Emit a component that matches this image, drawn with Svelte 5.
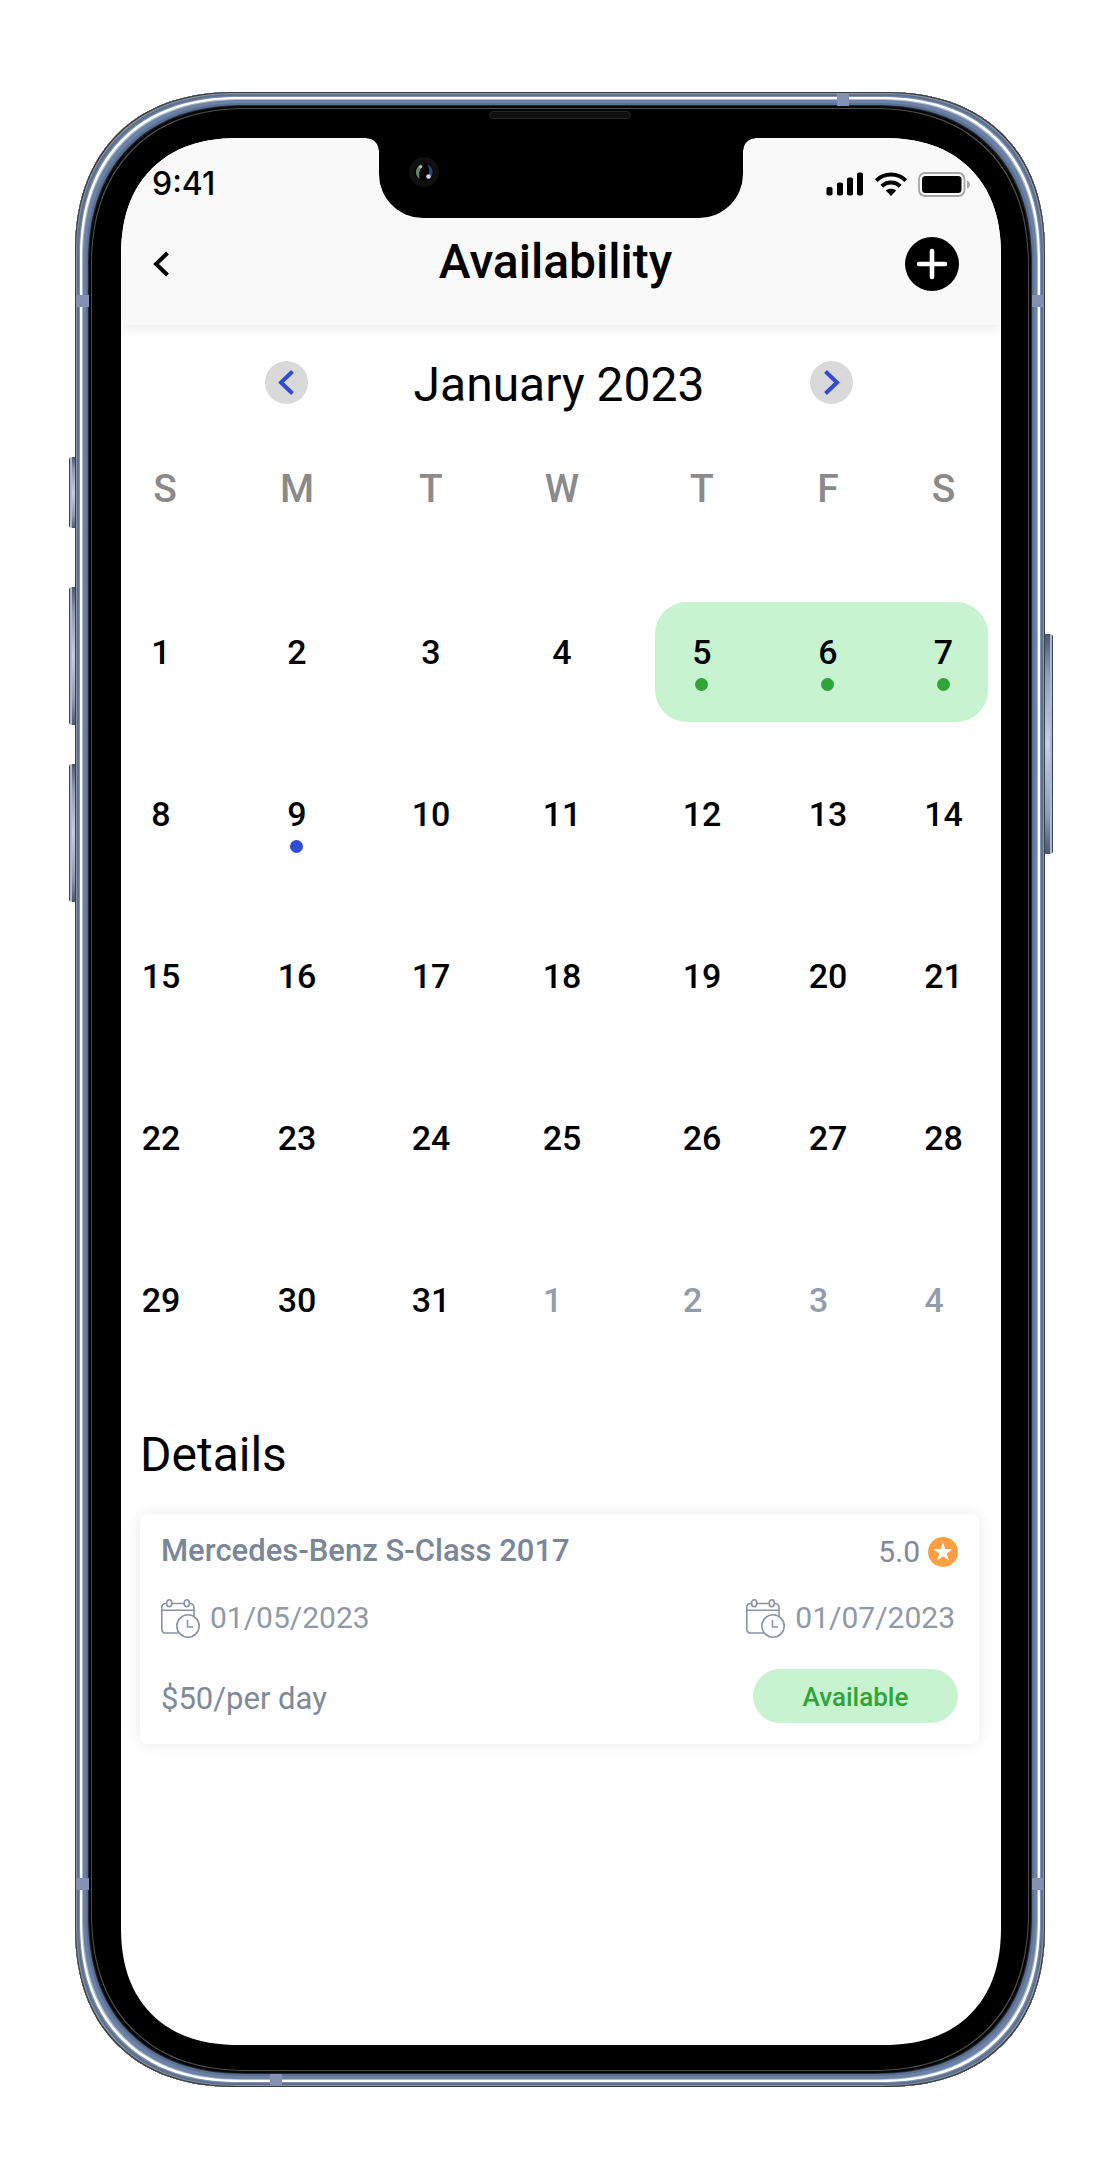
<script>
  const weekdays = [
    { id: 'sun', label: 'S', weight: 80 },
    { id: 'mon', label: 'M', weight: 192 },
    { id: 'tue', label: 'T', weight: 76 },
    { id: 'wed', label: 'W', weight: 186 },
    { id: 'thu', label: 'T', weight: 94 },
    { id: 'fri', label: 'F', weight: 158 },
    { id: 'sat', label: 'S', weight: 81 }
  ];
  const total = weekdays.reduce((sum, d) => sum + d.weight, 0);

  const booked = [5, 6, 7];
  const today = 9;

  const weeks = Array.from({ length: 5 }, (_, w) =>
    Array.from({ length: 7 }, (_, d) => {
      const n = w * 7 + d + 1;
      const next = n > 31;
      return {
        n: next ? n - 31 : n,
        next,
        booked: !next && booked.includes(n),
        first: !next && n === booked[0],
        last: !next && n === booked[booked.length - 1],
        today: !next && n === today
      };
    })
  );
</script>

{#snippet calendarIcon()}
  <svg class="cal-icon" viewBox="0 0 39 39" aria-hidden="true">
    <path d="M5.5 4.5H4.5a3.5 3.5 0 0 0-3.7 3.5V30.5a3.5 3.5 0 0 0 3.7 3.5H17.5M11 4.5H23M29 4.5a3.8 3.8 0 0 1 4 3.8V17M1 11.3H33" />
    <ellipse cx="8.2" cy="4.3" rx="2.6" ry="3.5" />
    <ellipse cx="25.8" cy="4.3" rx="2.6" ry="3.5" />
    <circle cx="27" cy="27" r="11.2" />
    <path d="M26.5 21V28H32" />
  </svg>
{/snippet}

<div class="stage">
  <div class="phone">
    <i class="key key-mute"></i>
    <i class="key key-up"></i>
    <i class="key key-down"></i>
    <i class="key key-power"></i>
    <i class="band band-top"></i>
    <i class="band band-bottom"></i>
    <i class="band band-left upper"></i>
    <i class="band band-left lower"></i>
    <i class="band band-right upper"></i>
    <i class="band band-right lower"></i>
    <i class="speaker"></i>

    <div class="screen">
      <div class="notch">
        <svg class="camera" viewBox="0 0 30 30" aria-hidden="true">
          <circle cx="15" cy="15" r="15" fill="#0f0f10" />
          <circle cx="15" cy="15" r="9.3" fill="#030303" />
          <path d="M11.5 7.5A8.5 8.5 0 0 0 10.5 22C9.6 17 10.8 12 14 9Z" fill="#5c8673" />
          <path d="M18.5 7.5A8.5 8.5 0 0 1 23.5 15.5C23.5 19 21 22 18 22.5C20.8 17 20.8 12 18.5 7.5Z" fill="#1c4a8c" />
          <circle cx="15" cy="15" r="4.6" fill="#0b0808" />
          <circle cx="11.5" cy="10" r="1.4" fill="#a8c4b5" />
          <circle cx="19.5" cy="19.5" r="2.3" fill="#d4d4ee" />
        </svg>
      </div>

      <header>
        <div class="status">
          <span class="time">9:41</span>
          <div class="signals">
            <svg width="38" height="24" viewBox="0 0 38 24" aria-hidden="true">
              <rect x="0.5" y="15" width="6" height="8.5" rx="1.8" />
              <rect x="11" y="10.5" width="6" height="13" rx="1.8" />
              <rect x="21" y="5.5" width="6" height="18" rx="1.8" />
              <rect x="31" y="0.5" width="6" height="23" rx="1.8" />
            </svg>
            <svg width="34" height="24" viewBox="0 0 34 24" aria-hidden="true">
              <g fill="none" stroke="#000" stroke-width="4">
                <path d="M2.2 8.6C10.4 .6 23.6 .6 31.8 8.6" />
                <path d="M7.8 14.2C13 9.2 21 9.2 26.2 14.2" />
              </g>
              <path d="M17 24L11.8 18.6C14.6 16 19.4 16 22.2 18.6Z" />
            </svg>
            <svg width="53" height="25" viewBox="0 0 53 25" aria-hidden="true">
              <rect x="1" y="1" width="45.5" height="23" rx="6" fill="none" stroke="#a6a6a6" stroke-width="1.8" />
              <rect x="4" y="4" width="39.5" height="17" rx="3.5" />
              <path d="M49 8.5C53 10 53 15 49 16.5Z" fill="#a6a6a6" />
            </svg>
          </div>
        </div>
        <div class="nav">
          <button class="back" aria-label="Back">
            <svg width="18" height="28" viewBox="0 0 18 28" aria-hidden="true">
              <path d="M15.5 3L4 14L15.5 25" fill="none" stroke="#000" stroke-width="4" />
            </svg>
          </button>
          <h1>Availability</h1>
          <button class="add" aria-label="Add availability">
            <svg viewBox="0 0 54 54" aria-hidden="true">
              <path d="M27 14V40M14 27H40" fill="none" stroke="#fff" stroke-width="4.6" stroke-linecap="round" />
            </svg>
          </button>
        </div>
      </header>

      <main>
        <div class="month">
          <button class="step" aria-label="Previous month">
            <svg viewBox="0 0 43 43" aria-hidden="true"><path d="M27.5 10.5L16 21.5L27.5 32.5" /></svg>
          </button>
          <h2>January 2023</h2>
          <button class="step" aria-label="Next month">
            <svg viewBox="0 0 43 43" aria-hidden="true"><path d="M15.5 10.5L27 21.5L15.5 32.5" /></svg>
          </button>
        </div>

        <table>
          <colgroup>
            {#each weekdays as d (d.id)}
              <col style="width: {(d.weight / total) * 100}%" />
            {/each}
          </colgroup>
          <thead>
            <tr>
              {#each weekdays as d (d.id)}
                <th scope="col">{d.label}</th>
              {/each}
            </tr>
          </thead>
          <tbody>
            {#each weeks as week}
              <tr>
                {#each week as day}
                  <td>
                    <button
                      class="day"
                      class:next={day.next}
                      class:booked={day.booked}
                      class:first={day.first}
                      class:last={day.last}
                      class:today={day.today}
                    >
                      <span class="num">{day.n}</span>
                      {#if day.booked || day.today}<i class="dot"></i>{/if}
                    </button>
                  </td>
                {/each}
              </tr>
            {/each}
          </tbody>
        </table>

        <section class="details">
          <h2>Details</h2>
          <article class="card">
            <div class="line">
              <h3>Mercedes-Benz S-Class 2017</h3>
              <span class="rating">
                5.0
                <svg width="30" height="30" viewBox="0 0 30 30" aria-hidden="true">
                  <circle cx="15" cy="15" r="15" fill="#ff9f43" />
                  <path d="M15 5.2L17.3 12.1L24.4 12.2L18.7 16.5L20.8 23.4L15 19.2L9.2 23.4L11.3 16.5L5.6 12.2L12.7 12.1Z" fill="#fff" />
                </svg>
              </span>
            </div>
            <div class="line dates">
              <span class="date">{@render calendarIcon()}01/05/2023</span>
              <span class="date">{@render calendarIcon()}01/07/2023</span>
            </div>
            <div class="line price">
              <span class="rate">$50/per day</span>
              <span class="pill">Available</span>
            </div>
          </article>
        </section>
      </main>
    </div>
  </div>
</div>

<style>
  :global(body) {
    background: #fff;
  }
  .stage {
    padding: 92px 75px 94px;
    font-family: Roboto, 'Liberation Sans', sans-serif;
    color: #000;
  }
  button {
    border: 0;
    padding: 0;
    background: none;
    font: inherit;
    color: inherit;
    cursor: pointer;
  }
  h1,
  h2,
  h3 {
    margin: 0;
    font-weight: 400;
  }
  svg {
    display: block;
  }

  .phone {
    position: relative;
    padding: 46px 44px 42px 46px;
    border-radius: 148px;
    background: #000;
    box-shadow:
      inset 0 0 0 1px #3a3c40,
      inset 0 0 0 2px #8d949e,
      inset 0 0 0 4px #5c7090,
      inset 0 0 0 5px #7f92b0,
      inset 0 0 0 7px #fff,
      inset 0 0 0 8px #a9b8cf,
      inset 0 0 0 11px #6c82a5,
      inset 0 0 0 13px #5b7092,
      inset 0 0 0 14px #222a36,
      inset 0 0 0 16px #050505,
      inset 0 0 0 17px #4a4a4a;
  }

  /* Hardware on the rim of the handset */
  .key {
    position: absolute;
    left: -6px;
    width: 6px;
    border-radius: 3px 0 0 3px;
    background: linear-gradient(90deg, #3a4250 0 1px, #aeb9cf 1px 3px, transparent 3px),
      linear-gradient(#4a586f, #8c9dbb 18%, #c3d0ea 50%, #8c9dbb 82%, #4a586f);
  }
  .key-mute {
    top: 365px;
    height: 71px;
  }
  .key-up {
    top: 495px;
    height: 138px;
  }
  .key-down {
    top: 672px;
    height: 138px;
  }
  .key-power {
    left: auto;
    right: -8px;
    top: 542px;
    width: 8px;
    height: 220px;
    border-radius: 0 3px 3px 0;
    background: linear-gradient(270deg, #3a4250 0 1px, #aeb9cf 1px 3px, transparent 3px),
      linear-gradient(#4a586f, #8c9dbb 18%, #c3d0ea 50%, #8c9dbb 82%, #4a586f);
  }
  .band {
    position: absolute;
    background: #8491b4;
    width: 12px;
    height: 12px;
  }
  .band-top {
    top: 2px;
    right: 196px;
  }
  .band-bottom {
    bottom: 1px;
    left: 195px;
  }
  .band-left {
    left: 2px;
  }
  .band-right {
    right: 1px;
  }
  .upper {
    top: 203px;
  }
  .lower {
    bottom: 197px;
  }
  .speaker {
    position: absolute;
    top: 19px;
    left: 50%;
    width: 142px;
    height: 8px;
    margin-left: -71px;
    box-sizing: border-box;
    border: 1px solid #262626;
    border-radius: 4px;
    background: #101010;
  }

  .screen {
    position: relative;
    overflow: hidden;
    border-radius: 108px;
    background: #fff;
  }

  /* Continuous corners where the browser can draw them */
  @supports (corner-shape: squircle) {
    .phone {
      border-radius: 162px;
      corner-shape: superellipse(1.2);
    }
    .screen {
      border-radius: 118px;
      corner-shape: superellipse(1.2);
    }
  }

  .notch {
    position: absolute;
    z-index: 1;
    top: 0;
    left: 50%;
    width: 364px;
    height: 80px;
    margin-left: -182px;
    border-radius: 0 0 44px 44px;
    background: #000;
  }
  .notch::before,
  .notch::after {
    content: '';
    position: absolute;
    top: 0;
    width: 12px;
    height: 12px;
  }
  .notch::before {
    right: 100%;
    background: radial-gradient(circle at 0 100%, transparent 11px, #000 12px);
  }
  .notch::after {
    left: 100%;
    background: radial-gradient(circle at 100% 100%, transparent 11px, #000 12px);
  }
  .camera {
    position: absolute;
    left: 30px;
    top: 19px;
    width: 30px;
    height: 30px;
  }

  header {
    background: #f9f9f9;
    box-shadow: 0 4px 12px rgba(0, 0, 0, 0.07);
    padding: 26px 30px 32px 31px;
  }
  .status {
    display: flex;
    align-items: center;
    justify-content: space-between;
    height: 40px;
  }
  .time {
    font: 500 32px/40px Inter, sans-serif;
  }
  .signals {
    display: flex;
    align-items: center;
    gap: 10px;
  }
  .nav {
    display: grid;
    grid-template-columns: 54px 1fr 54px;
    align-items: center;
    margin: 30px 12px 0 0;
    height: 56px;
    padding-bottom: 3px;
  }
  h1 {
    font-size: 48px;
    line-height: 56px;
    font-weight: 500;
    text-align: center;
    padding-bottom: 4px;
  }
  .add {
    width: 54px;
    height: 54px;
    border-radius: 50%;
    background: #000;
  }

  main {
    padding-bottom: 301px;
  }
  .month {
    display: flex;
    justify-content: center;
    align-items: center;
    gap: 106px;
    height: 43px;
    margin-top: 36px;
    padding-right: 4px;
  }
  h2 {
    font-size: 48px;
    line-height: 56px;
  }
  .month h2 {
    padding-top: 4px;
  }
  .step {
    width: 43px;
    height: 43px;
    border-radius: 50%;
    background: #d9d9d9;
  }
  .step path {
    fill: none;
    stroke: #2f4bd8;
    stroke-width: 4;
  }

  table {
    width: calc(100% - 13px);
    margin-top: 65px;
    table-layout: fixed;
    border-collapse: collapse;
  }
  th {
    padding: 0 0 72px;
    font-size: 39px;
    line-height: 40px;
    font-weight: 500;
    color: #8a8a8a;
  }
  td {
    padding: 21px 0;
  }
  .day {
    display: flex;
    flex-direction: column;
    align-items: center;
    width: 100%;
    height: 120px;
    padding-top: 30px;
    font-size: 34px;
    line-height: 40px;
    font-weight: 500;
  }
  .num {
    min-width: 38px;
    text-align: center;
  }
  th:first-child {
    padding-left: 8px;
  }
  td:last-child .day,
  th:last-child {
    padding-right: 8px;
  }
  .next {
    color: #949cab;
  }
  .next .num {
    text-align: left;
  }
  .booked {
    background: #c8f3d1;
  }
  .first {
    border-radius: 32px 0 0 32px;
  }
  .last {
    border-radius: 0 32px 32px 0;
  }
  .dot {
    width: 13px;
    height: 13px;
    margin-top: 6px;
    border-radius: 50%;
    background: #30a436;
  }
  .today .dot {
    background: #2f4bd8;
  }

  .details {
    margin: 36px 22px 0 19px;
  }
  .card {
    margin-top: 31px;
    padding: 18px 21px 21px;
    border-radius: 8px;
    background: #fff;
    box-shadow: 0 0 16px rgba(0, 0, 0, 0.09);
    font-size: 30px;
    line-height: 40px;
    color: #7f899a;
  }
  .line {
    display: flex;
    align-items: center;
    justify-content: space-between;
  }
  h3 {
    margin-top: -2px;
    font-size: 31px;
    line-height: 40px;
    font-weight: 500;
    color: #7a869a;
  }
  .rating {
    display: flex;
    align-items: center;
    gap: 8px;
  }
  .dates {
    margin-top: 26px;
    padding-right: 3px;
    color: #9098a9;
  }
  .date {
    display: flex;
    align-items: center;
    gap: 10px;
  }
  .cal-icon {
    width: 39px;
    height: 39px;
    fill: none;
    stroke: #8a93a5;
    stroke-width: 1.6;
  }
  .price {
    margin-top: 31px;
  }
  .rate {
    padding-top: 6px;
    font-size: 31px;
  }
  .pill {
    width: 205px;
    padding-top: 2px;
    border-radius: 27px;
    background: #c8f3d1;
    color: #30a436;
    font-size: 26px;
    line-height: 52px;
    font-weight: 500;
    text-align: center;
  }
</style>
